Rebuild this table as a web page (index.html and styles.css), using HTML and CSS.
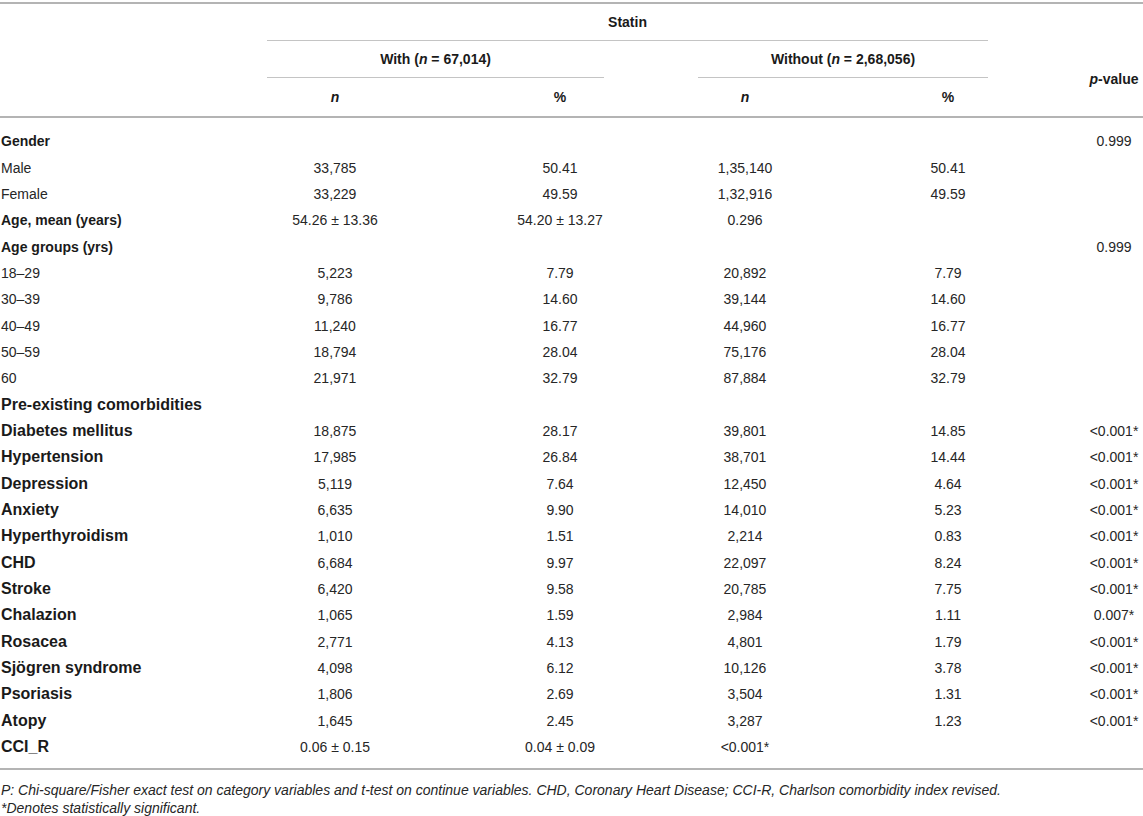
FILE: index.html
```html
<!DOCTYPE html>
<html>
    <head>
        <meta charset="utf-8">
        <link rel="stylesheet" href="styles.css">
    </head>
    <body>
        <table class="stats">
            <colgroup>
                <col class="c-label">
                <col class="c-n1">
                <col class="c-p1">
                <col class="c-n2">
                <col class="c-p2">
                <col class="c-pv">
            </colgroup>
            <thead>
                <tr class="h1">
                    <th rowspan="3" class="corner"></th>
                    <th colspan="4"><div class="grp grp-all">Statin</div></th>
                    <th></th>
                </tr>
                <tr class="h2">
                    <th colspan="2"><div class="grp grp-with">With (<i>n</i> = 67,014)</div></th>
                    <th colspan="2"><div class="grp grp-without">Without (<i>n</i> = 2,68,056)</div></th>
                    <th rowspan="2" class="pv"><i>p</i>-value</th>
                </tr>
                <tr class="h3">
                    <th><i>n</i></th>
                    <th>%</th>
                    <th><i>n</i></th>
                    <th>%</th>
                </tr>
            </thead>
            <tbody>
                <tr class="first"><td class="lbl b">Gender</td><td></td><td></td><td></td><td></td><td class="pv">0.999</td></tr>
                <tr><td class="lbl">Male</td><td>33,785</td><td>50.41</td><td>1,35,140</td><td>50.41</td><td></td></tr>
                <tr><td class="lbl">Female</td><td>33,229</td><td>49.59</td><td>1,32,916</td><td>49.59</td><td></td></tr>
                <tr><td class="lbl b">Age, mean (years)</td><td>54.26 ± 13.36</td><td>54.20 ± 13.27</td><td>0.296</td><td></td><td></td></tr>
                <tr><td class="lbl b">Age groups (yrs)</td><td></td><td></td><td></td><td></td><td class="pv">0.999</td></tr>
                <tr><td class="lbl">18–29</td><td>5,223</td><td>7.79</td><td>20,892</td><td>7.79</td><td></td></tr>
                <tr><td class="lbl">30–39</td><td>9,786</td><td>14.60</td><td>39,144</td><td>14.60</td><td></td></tr>
                <tr><td class="lbl">40–49</td><td>11,240</td><td>16.77</td><td>44,960</td><td>16.77</td><td></td></tr>
                <tr><td class="lbl">50–59</td><td>18,794</td><td>28.04</td><td>75,176</td><td>28.04</td><td></td></tr>
                <tr><td class="lbl">60</td><td>21,971</td><td>32.79</td><td>87,884</td><td>32.79</td><td></td></tr>
                <tr><td class="lbl b cm" colspan="2">Pre-existing comorbidities</td><td></td><td></td><td></td><td></td></tr>
                <tr><td class="lbl b cm">Diabetes mellitus</td><td>18,875</td><td>28.17</td><td>39,801</td><td>14.85</td><td class="pv">&lt;0.001*</td></tr>
                <tr><td class="lbl b cm">Hypertension</td><td>17,985</td><td>26.84</td><td>38,701</td><td>14.44</td><td class="pv">&lt;0.001*</td></tr>
                <tr><td class="lbl b cm">Depression</td><td>5,119</td><td>7.64</td><td>12,450</td><td>4.64</td><td class="pv">&lt;0.001*</td></tr>
                <tr><td class="lbl b cm">Anxiety</td><td>6,635</td><td>9.90</td><td>14,010</td><td>5.23</td><td class="pv">&lt;0.001*</td></tr>
                <tr><td class="lbl b cm">Hyperthyroidism</td><td>1,010</td><td>1.51</td><td>2,214</td><td>0.83</td><td class="pv">&lt;0.001*</td></tr>
                <tr><td class="lbl b cm">CHD</td><td>6,684</td><td>9.97</td><td>22,097</td><td>8.24</td><td class="pv">&lt;0.001*</td></tr>
                <tr><td class="lbl b cm">Stroke</td><td>6,420</td><td>9.58</td><td>20,785</td><td>7.75</td><td class="pv">&lt;0.001*</td></tr>
                <tr><td class="lbl b cm">Chalazion</td><td>1,065</td><td>1.59</td><td>2,984</td><td>1.11</td><td class="pv">0.007*</td></tr>
                <tr><td class="lbl b cm">Rosacea</td><td>2,771</td><td>4.13</td><td>4,801</td><td>1.79</td><td class="pv">&lt;0.001*</td></tr>
                <tr><td class="lbl b cm">Sjögren syndrome</td><td>4,098</td><td>6.12</td><td>10,126</td><td>3.78</td><td class="pv">&lt;0.001*</td></tr>
                <tr><td class="lbl b cm">Psoriasis</td><td>1,806</td><td>2.69</td><td>3,504</td><td>1.31</td><td class="pv">&lt;0.001*</td></tr>
                <tr><td class="lbl b cm">Atopy</td><td>1,645</td><td>2.45</td><td>3,287</td><td>1.23</td><td class="pv">&lt;0.001*</td></tr>
                <tr class="last"><td class="lbl b cm">CCI_R</td><td>0.06 ± 0.15</td><td>0.04 ± 0.09</td><td>&lt;0.001*</td><td></td><td></td></tr>
            </tbody>
        </table>
        <div class="notes">
            <p>P: Chi-square/Fisher exact test on category variables and t-test on continue variables. CHD, Coronary Heart Disease; CCI-R, Charlson comorbidity index revised.</p>
            <p>*Denotes statistically significant.</p>
        </div>
    </body>
</html>
```

FILE: styles.css
```css
*{ padding: 0px; margin: 0px; }

html, body
{
    background: white;
    width: 100%;
}

body
{
    font-family: "Liberation Sans", Arial, sans-serif;
    font-size: 14px;
    color: #262626;
}

.stats
{
    width: 1143px;
    margin-top: 2px;
    border-collapse: collapse;
    table-layout: fixed;
    border-top: 2px solid #b4b4b4;
    border-bottom: 2px solid #b4b4b4;
}

.c-label { width: 223px; }
.c-n1 { width: 224px; }
.c-p1 { width: 226px; }
.c-n2 { width: 144px; }
.c-p2 { width: 262px; }
.c-pv { width: 64px; }

.stats th
{
    font-weight: bold;
    text-align: center;
    padding: 0;
    color: #1a1a1a;
}

.grp
{
    height: 36px;
    line-height: 37px;
    border-bottom: 1px solid #c4c4c4;
}
.grp-all { margin: 0 91px 0 44px; }
.grp-with { margin: 0 69px 0 44px; }
.grp-without { margin: 0 91px 0 25px; }

.h3 th
{
    height: 38px;
}

.stats th.corner,
.h3 th,
.stats th.pv
{
    border-bottom: 2px solid #b4b4b4;
}

th.pv { padding-left: 6px; padding-top: 1px; }

.stats td
{
    text-align: center;
    height: 26.35px;
    padding: 0;
    white-space: nowrap;
}

.stats td.lbl
{
    text-align: left;
    padding-left: 1px;
}
.stats td.b
{
    font-weight: bold;
    color: #1a1a1a;
}
.stats td.cm { font-size: 16px; }
.stats td.pv { padding-left: 6px; }

.stats tr.first td { padding-top: 10px; }
.stats tr.last td { padding-bottom: 8px; }

.notes
{
    padding-top: 11px;
    padding-left: 1px;
    font-style: italic;
    font-size: 14px;
    line-height: 18px;
}
```
